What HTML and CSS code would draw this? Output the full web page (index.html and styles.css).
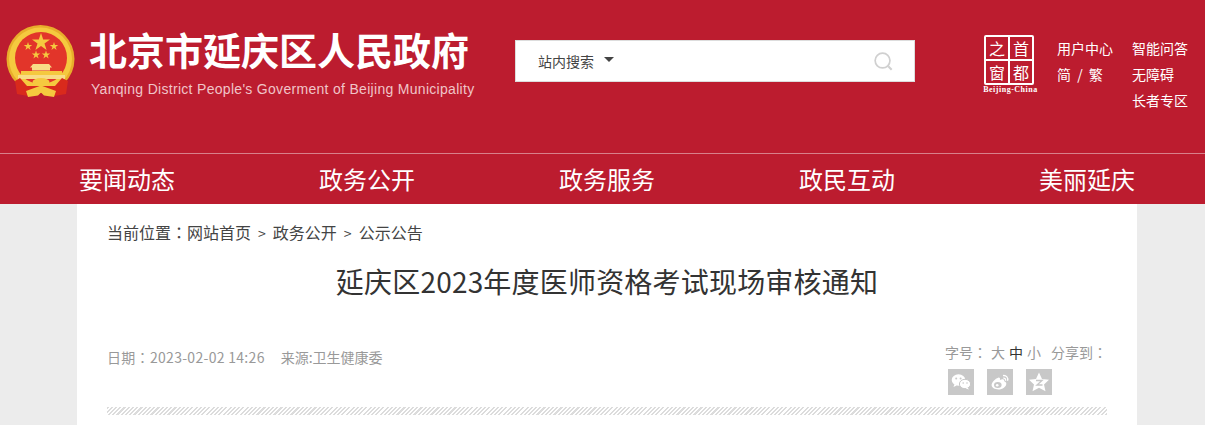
FILE: index.html
```html
<!doctype html>
<html lang="zh-CN">

<head>
    <meta charset="UTF-8">
    <title>延庆区2023年度医师资格考试现场审核通知</title>
    <link rel="stylesheet" href="styles.css">
</head>

<body>
    <!-- 頭部 -->
    <div class="header">
        <svg class="emblem" viewBox="4 22 76 78" aria-label="国徽">
            <circle cx="40.500" cy="59" r="34" fill="#e8ad2b" />
            <circle cx="40.500" cy="59" r="31.500" fill="#f5c93f" />
            <circle cx="41" cy="58" r="26" fill="#e2352a" />
            <polygon points="41,33 43.200,39.500 50,39.500 44.500,43.500 46.600,50 41,46 35.400,50 37.500,43.500 32,39.500 38.800,39.500" fill="#f5c93f" />
            <polygon points="28,42 29,45 32.200,45 29.600,46.900 30.600,50 28,48.100 25.400,50 26.400,46.900 23.800,45 27,45" fill="#f5c93f" />
            <polygon points="54,42 55,45 58.200,45 55.600,46.900 56.600,50 54,48.100 51.400,50 52.400,46.900 49.800,45 53,45" fill="#f5c93f" />
            <polygon points="36,50.500 37,53.500 40.200,53.500 37.600,55.400 38.600,58.500 36,56.600 33.400,58.500 34.400,55.400 31.800,53.500 35,53.500" fill="#f5c93f" />
            <polygon points="46,50.500 47,53.500 50.200,53.500 47.600,55.400 48.600,58.500 46,56.600 43.400,58.500 44.400,55.400 41.800,53.500 45,53.500" fill="#f5c93f" />
            <path d="M33 64h16l3 3.500h-2v3h-18v-3h-2z" fill="#f8dc86" />
            <path d="M21 71h41v4H21z" fill="#f5c93f" />
            <path d="M18 75h47v4H18z" fill="#f8dc86" />
            <path d="M20 78L15 81L17 94L28 96L41 91L54 96L66 94L68 81L62 78L55 86H27z" fill="#d92a1c" />
            <ellipse cx="41" cy="82" rx="8.500" ry="4" fill="#f5c93f" />
            <path d="M26 91L41 85.500L56 91L54 97L44 95.500L41 92.500L38 95.500L28 97z" fill="#f5c93f" />
        </svg>
        <div class="site-name">
            <div class="site-title">北京市延庆区人民政府</div>
            <div class="site-en">Yanqing District People's Goverment of Beijing Municipality</div>
        </div>

        <!-- 搜索 -->
        <div class="search">
            <span class="search-label">站内搜索</span>
            <span class="search-arrow"></span>
            <svg class="search-icon" viewBox="0 0 20 20">
                <circle cx="9" cy="9" r="7.800" fill="none" stroke="#d0d0d0" stroke-width="1.800" />
                <path d="M15 15l3.600 3.600" stroke="#d0d0d0" stroke-width="2.200" />
            </svg>
        </div>

        <div class="capital">
            <div class="capital-box">
                <span>之</span><span>首</span><span>窗</span><span>都</span>
            </div>
            <div class="capital-en">Beijing-China</div>
        </div>

        <div class="links">
            <a>用户中心</a>
            <a>智能问答</a>
            <a class="lang">简 / 繁</a>
            <a>无障碍</a>
            <a></a>
            <a>长者专区</a>
        </div>
    </div>

    <!-- 導航 -->
    <div class="nav">
        <a>要闻动态</a>
        <a>政务公开</a>
        <a>政务服务</a>
        <a>政民互动</a>
        <a>美丽延庆</a>
    </div>

    <!-- 正文 -->
    <div class="main">
        <div class="crumb">当前位置<span class="colon" lang="zh-TW">：</span>网站首页<i>&gt;</i>政务公开<i>&gt;</i>公示公告</div>
        <h1>延庆区2023年度医师资格考试现场审核通知</h1>
        <div class="info">
            <div class="info-left">
                <span class="date">日期<span class="colon" lang="zh-TW">：</span>2023-02-02 14:26</span>
                <span>来源:卫生健康委</span>
            </div>
            <div class="info-right">
                <div class="tools">
                    <span>字号<span class="colon" lang="zh-TW">：</span></span>
                    <span>大</span>
                    <span class="on">中</span>
                    <span>小</span>
                    <span class="share-label">分享到<span class="colon" lang="zh-TW">：</span></span>
                </div>
                <div class="share">
                    <a>
                        <svg viewBox="0 0 26 26">
                            <ellipse cx="10.500" cy="11" rx="6.800" ry="5.800" fill="#fff" />
                            <path d="M6.500 15l-1 3 3.200-1.600z" fill="#fff" />
                            <ellipse cx="17" cy="15" rx="5.600" ry="4.700" fill="#fff" stroke="#c8c8c8" stroke-width="1" />
                            <path d="M19.500 18.600l1.500 2-3.200-1.200z" fill="#fff" />
                            <circle cx="8.200" cy="9.500" r="1" fill="#c8c8c8" />
                            <circle cx="12.600" cy="9.500" r="1" fill="#c8c8c8" />
                            <circle cx="15.200" cy="14" r=".8" fill="#c8c8c8" />
                            <circle cx="19" cy="14" r=".8" fill="#c8c8c8" />
                        </svg>
                    </a>
                    <a>
                        <svg viewBox="0 0 26 26">
                            <path d="M11.500 20.500c-3.800 0-6.900-1.700-6.900-4.400 0-2.800 3.800-6.600 6.600-7.400 1.500-.4 2.200.6 1.700 2.200 2.500-1.100 4.500-.8 4.300 1.300 1.300.4 2.100 1.200 2.100 2.500 0 2.900-3.800 5.800-7.800 5.800z" fill="#fff" />
                            <ellipse cx="10.800" cy="16" rx="3.800" ry="2.900" fill="#c8c8c8" />
                            <circle cx="10.200" cy="16.200" r="1.300" fill="#fff" />
                            <path d="M16 6.600c3.300-.6 5.600 2.200 4.500 5.200M16.300 9.200c1.600-.3 2.700 1 2.200 2.500" fill="none" stroke="#fff" stroke-width="1.300" />
                        </svg>
                    </a>
                    <a>
                        <svg viewBox="0 0 26 26">
                            <polygon points="13,3.500 16,10 23,10.800 18,15.400 19.500,22.300 13,18.800 6.500,22.300 8,15.400 3,10.800 10,10" fill="#fff" />
                            <path d="M10 11.500h6l-5 4.500h5.500" fill="none" stroke="#c8c8c8" stroke-width="1.400" />
                        </svg>
                    </a>
                </div>
            </div>
        </div>
        <div class="stripes"></div>
    </div>
</body>

</html>
```

FILE: styles.css
```css
body {
    margin: 0;
    padding: 0;
    height: 425px;
    overflow: hidden;
    background-color: #ececec;
    font-family: "Noto Sans CJK SC", "Liberation Sans", sans-serif;
}

/* 頭部 */
.header {
    display: flex;
    height: 153px;
    box-sizing: border-box;
    padding: 22px 0 0 4px;
    background-color: #bc1c2f;
    color: #ffffff;
}

.emblem {
    width: 76px;
    height: 78px;
    flex-shrink: 0;
}

.site-name {
    width: 426px;
    margin: 3px 0 0 9px;
}

.site-title {
    margin-top: 2px;
    font-size: 38px;
    line-height: 44px;
    font-weight: 700;
    white-space: nowrap;
}

.site-en {
    margin-top: 10px;
    margin-left: 2px;
    font-family: "Liberation Sans", sans-serif;
    font-size: 14px;
    letter-spacing: 0.3px;
    line-height: 16px;
    color: #f0c4c8;
    white-space: nowrap;
}

/* 搜索 */
.search {
    display: flex;
    align-items: center;
    box-sizing: border-box;
    width: 400px;
    height: 42px;
    margin-top: 18px;
    padding: 0 21px 0 22px;
    background-color: #ffffff;
    border: 1px solid #dddddd;
    color: #444444;
    font-size: 14px;
}

.search-arrow {
    width: 0;
    height: 0;
    margin: -4px 0 0 10px;
    border-top: 5px solid #444444;
    border-left: 5px solid transparent;
    border-right: 5px solid transparent;
}

.search-icon {
    width: 19px;
    height: 19px;
    margin-left: auto;
}

/* 首都之窗 */
.capital {
    width: 54px;
    margin: 13px 0 0 69px;
    flex-shrink: 0;
}

.capital-box {
    display: grid;
    grid-template-columns: 1fr 1fr;
    grid-template-rows: 1fr 1fr;
    gap: 2px;
    box-sizing: border-box;
    width: 50px;
    height: 50px;
    border: 2px solid #ffffff;
    background-color: #ffffff;
    border-radius: 2px;
}

.capital-box span {
    display: flex;
    align-items: center;
    justify-content: center;
    background-color: #bc1c2f;
    font-size: 16px;
    line-height: 1;
}

.capital-en {
    width: 55px;
    margin-top: 0;
    margin-left: -1px;
    font-family: "Liberation Serif", serif;
    font-size: 8px;
    letter-spacing: 0.5px;
    line-height: 10px;
    font-weight: 700;
    white-space: nowrap;
    text-align: center;
}

.links {
    display: grid;
    grid-template-columns: 56px 56px;
    grid-auto-rows: 26px;
    column-gap: 19px;
    margin: 13px 0 0 19px;
    font-size: 14px;
    line-height: 26px;
}

.links a {
    white-space: nowrap;
}

.links .lang {
    word-spacing: 3px;
}

/* 導航 */
.nav {
    display: flex;
    height: 50px;
    padding-left: 7px;
    border-top: 1px solid #d8808b;
    background-color: #bc1c2f;
}

.nav a {
    flex: 0 0 240px;
    text-align: center;
    color: #ffffff;
    font-size: 24px;
    line-height: 50px;
}

/* 正文 */
.main {
    box-sizing: border-box;
    width: 1060px;
    height: 221px;
    margin-left: 77px;
    padding: 0 30px;
    background-color: #ffffff;
}

.crumb {
    padding-top: 16px;
    font-size: 16px;
    line-height: 24px;
    color: #444444;
    white-space: nowrap;
}

.crumb i {
    margin: 0 7px;
    font-style: normal;
    font-size: 14px;
}

/* 繁中字形的冒號在字身中央 */
.colon {
    font-family: "Noto Sans CJK TC", sans-serif;
}

h1 {
    margin: 16px 0 0;
    font-size: 28px;
    letter-spacing: 0.2px;
    line-height: 40px;
    font-weight: 400;
    color: #333333;
    text-align: center;
}

.info {
    display: flex;
    justify-content: space-between;
    height: 63px;
    margin-top: 38px;
    font-size: 14px;
    color: #999999;
}

.info-left {
    display: flex;
    gap: 16px;
    padding-top: 8px;
    line-height: 20px;
}

.date {
    letter-spacing: 0.3px;
}

.info-right {
    width: 162px;
    padding-top: 3px;
    line-height: 20px;
}

.tools {
    display: flex;
    gap: 4px;
}

.tools .on {
    color: #333333;
}

.share-label {
    margin-left: 6px;
}

.share {
    display: flex;
    gap: 13px;
    margin: 7px 0 0 3px;
}

.share a {
    width: 26px;
    height: 26px;
    background-color: #c8c8c8;
}

.share svg {
    display: block;
    width: 26px;
    height: 26px;
}

.stripes {
    height: 8px;
    margin-top: 5px;
    background: repeating-linear-gradient(135deg, #dcdcdc 0, #dcdcdc 1.5px, #ffffff 1.5px, #ffffff 3px);
}
```
